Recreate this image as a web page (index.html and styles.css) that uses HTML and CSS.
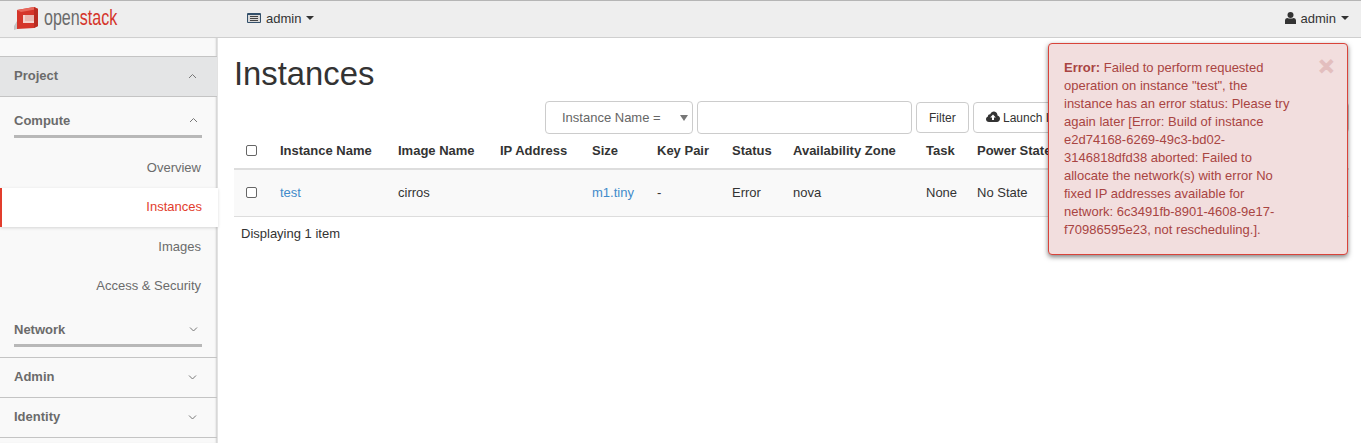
FILE: index.html
```html
<!DOCTYPE html>
<html lang="en">
<head>
    <meta charset="UTF-8">
    <title>Instances</title>
    <link rel="stylesheet" href="styles.css">
</head>
<body>
    <nav class="topbar">
        <a class="brand">
            <svg class="brand-cube" width="25" height="24" viewBox="0 0 25 24">
                <path d="M0 20 L3 15 L3 23 L0 24 Z" fill="#c4c4c4"/>
                <path d="M3 4 L20 1 L24 3 L24 20 L20 22 L3 23 Z" fill="#d5352a"/>
                <path d="M3 4 L20 1 L24 3 L7 6 Z" fill="#e8685c"/>
                <path d="M20 1 L24 3 L24 20 L20 22 Z" fill="#b92c22"/>
                <rect x="9" y="9" width="11" height="8" fill="#f4d4cf"/>
                <rect x="11" y="9" width="9" height="6" fill="#e9b9b2"/>
            </svg>
            <span class="brand-word"><span class="brand-open">open</span><span class="brand-stack">stack</span></span>
        </a>
        <a class="project-menu">
            <svg width="14" height="12" viewBox="0 0 14 12">
                <rect x="0" y="1" width="14" height="10" rx="1" fill="#33506b"/>
                <rect x="1" y="3" width="12" height="7" fill="#d8d8d8"/>
                <path d="M3 4.5h8M3 6.5h8M3 8.5h8" stroke="#444" stroke-width="1"/>
            </svg>
            admin <span class="caret"></span>
        </a>
        <a class="user-menu">
            <svg width="11" height="12" viewBox="0 0 11 12">
                <circle cx="5.5" cy="3" r="3" fill="#333"/>
                <path d="M0 12 V8.5 C0 6.8 1.4 6 2.6 6 C3.4 6.8 7.6 6.8 8.4 6 C9.6 6 11 6.8 11 8.5 V12 Z" fill="#333"/>
            </svg>
            admin <span class="caret"></span>
        </a>
    </nav>

    <div class="page">
        <aside class="sidebar">
            <div class="side-dash active-dash">
                <span>Project</span>
                <svg class="chev" width="9" height="6" viewBox="0 0 9 6"><path d="M1 5 L4.5 1.5 L8 5"/></svg>
            </div>
            <div class="side-group">
                <span>Compute</span>
                <svg class="chev" width="9" height="6" viewBox="0 0 9 6"><path d="M1 5 L4.5 1.5 L8 5"/></svg>
            </div>
            <ul class="side-links">
                <li>Overview</li>
                <li class="current">Instances</li>
                <li>Images</li>
                <li>Access &amp; Security</li>
            </ul>
            <div class="side-group">
                <span>Network</span>
                <svg class="chev" width="9" height="6" viewBox="0 0 9 6"><path d="M1 1.5 L4.5 5 L8 1.5"/></svg>
            </div>
            <div class="side-dash first-closed">
                <span>Admin</span>
                <svg class="chev" width="9" height="6" viewBox="0 0 9 6"><path d="M1 1.5 L4.5 5 L8 1.5"/></svg>
            </div>
            <div class="side-dash">
                <span>Identity</span>
                <svg class="chev" width="9" height="6" viewBox="0 0 9 6"><path d="M1 1.5 L4.5 5 L8 1.5"/></svg>
            </div>
        </aside>

        <main class="content">
            <h1>Instances</h1>
            <div class="toolbar">
                <div class="filter-select">
                    <span>Instance Name =</span>
                    <span class="select-arrow"></span>
                </div>
                <input class="filter-input" type="text">
                <button class="btn">Filter</button>
                <button class="btn btn-launch">
                    <svg width="14" height="11" viewBox="0 0 14 11">
                        <path fill-rule="evenodd" d="M3 11 C1.2 11 0 9.7 0 8.2 C0 6.9 .8 5.9 1.9 5.5 C1.9 3.9 3.1 3 4.3 3.2 C5 1.4 6.5 .3 8.2 .5 C10.2 .7 11.5 2.3 11.5 4.4 C13 4.8 14 6 14 7.6 C14 9.6 12.6 11 11 11 Z M7 3.4 L4.2 6.4 H6 V9 H8 V6.4 H9.8 Z" fill="#333"/>
                    </svg>
                    Launch Instance
                </button>
            </div>

            <table class="instances">
                <colgroup>
                    <col class="c-check"><col class="c-name"><col class="c-image"><col class="c-ip"><col class="c-size">
                    <col class="c-key"><col class="c-status"><col class="c-zone"><col class="c-task"><col class="c-power">
                </colgroup>
                <thead>
                    <tr>
                        <th><input class="check" type="checkbox"></th>
                        <th>Instance Name</th>
                        <th>Image Name</th>
                        <th>IP Address</th>
                        <th>Size</th>
                        <th>Key Pair</th>
                        <th>Status</th>
                        <th>Availability Zone</th>
                        <th>Task</th>
                        <th>Power State</th>
                    </tr>
                </thead>
                <tbody>
                    <tr>
                        <td><input class="check" type="checkbox"></td>
                        <td><a>test</a></td>
                        <td>cirros</td>
                        <td></td>
                        <td><a>m1.tiny</a></td>
                        <td>-</td>
                        <td>Error</td>
                        <td>nova</td>
                        <td>None</td>
                        <td>No State</td>
                    </tr>
                </tbody>
            </table>
            <p class="table-count">Displaying 1 item</p>
        </main>
    </div>

    <div class="toast">
        <span class="toast-close">&times;</span>
        <strong>Error:</strong> Failed to perform requested operation on instance "test", the instance has an error status: Please try again later [Error: Build of instance e2d74168-6269-49c3-bd02-3146818dfd38 aborted: Failed to allocate the network(s) with error No fixed IP addresses available for network: 6c3491fb-8901-4608-9e17-f70986595e23, not rescheduling.].
    </div>
</body>
</html>
```

FILE: styles.css
```css
* {
    box-sizing: border-box;
}

html, body {
    height: 100%;
}

body {
    margin: 0;
    overflow: hidden;
    font-family: "Liberation Sans", Arial, sans-serif;
    font-size: 13px;
    color: #333;
    background: #fff;
}

a {
    color: #428bca;
}

/* top bar */
.topbar {
    display: flex;
    align-items: center;
    height: 38px;
    padding: 0 12px 2px 0;
    background: #eeeeee;
    border-top: 1px solid #b5b5b5;
    border-bottom: 1px solid #cfcfcf;
}

.topbar a {
    color: #333;
}

.brand {
    display: flex;
    align-items: center;
    width: 247px;
    padding-left: 14px;
}

.brand-cube {
    margin-right: 5px;
}

.brand-word {
    display: inline-block;
    font-size: 22px;
    transform: scaleX(0.73);
    transform-origin: left center;
}

.brand-open {
    color: #6b6b6b;
}

.brand-stack {
    color: #d5352a;
}

.project-menu,
.user-menu {
    display: flex;
    align-items: center;
    gap: 5px;
}

.user-menu {
    margin-left: auto;
}

.caret {
    width: 0;
    height: 0;
    border-top: 4px solid #333;
    border-left: 4px solid transparent;
    border-right: 4px solid transparent;
}

/* sidebar */
.page {
    display: flex;
    height: calc(100% - 38px);
}

.sidebar {
    flex: none;
    width: 218px;
    padding-top: 18px;
    background: #f9f9f9;
    border-right: 1px solid #e2e2e2;
    box-shadow: inset -2px 0 2px -1px #ccc;
    color: #6b6b6b;
}

.side-dash {
    display: flex;
    justify-content: space-between;
    align-items: center;
    height: 40px;
    padding: 0 20px 2px 14px;
    border-bottom: 1px solid #c4c4c4;
    font-weight: bold;
}

.active-dash,
.first-closed {
    height: 41px;
    border-top: 1px solid #c4c4c4;
}

.active-dash {
    background: #e4e5e6;
}

.side-group {
    display: flex;
    justify-content: space-between;
    align-items: center;
    height: 28px;
    margin: 13px 15px 10px 14px;
    padding-right: 4px;
    padding-bottom: 5px;
    border-bottom: 3px solid #b8b8b8;
    font-weight: bold;
}

.side-links + .side-group {
    margin-top: 14px;
}

.chev {
    fill: none;
    stroke: #777;
    stroke-width: 1;
}

.side-links {
    margin: 0;
    padding: 0;
    list-style: none;
    text-align: right;
}

.side-links li {
    height: 39px;
    padding-right: 16px;
    line-height: 39px;
}

.side-links li:first-child {
    height: 40px;
}

.side-links .current {
    position: relative;
    width: 218px;
    line-height: 37px;
    background: #fff;
    border-left: 2px solid #e23d2d;
    color: #e23d2d;
    box-shadow: 0 1px 3px rgba(0, 0, 0, 0.15);
}

/* main area */
.content {
    flex: 1;
    min-width: 0;
    padding: 0 12px 0 16px;
}

h1 {
    margin: 16px 0 0;
    font-size: 32.8px;
    font-weight: normal;
    line-height: 40px;
}

.toolbar {
    display: flex;
    align-items: flex-start;
    gap: 4px;
    height: 33px;
    margin-top: 7px;
    padding-left: 311px;
}

.filter-select {
    display: flex;
    justify-content: space-between;
    align-items: center;
    flex: none;
    width: 148px;
    height: 33px;
    padding: 0 4px 0 16px;
    border: 1px solid #ccc;
    border-radius: 4px;
    color: #666;
}

.select-arrow {
    width: 0;
    height: 0;
    border-top: 6px solid #777;
    border-left: 4px solid transparent;
    border-right: 4px solid transparent;
}

.filter-input {
    flex: none;
    width: 215px;
    height: 33px;
    border: 1px solid #ccc;
    border-radius: 4px;
}

.btn {
    flex: none;
    height: 31px;
    margin-top: 1px;
    padding: 0 12px;
    font-family: inherit;
    font-size: 12px;
    color: #333;
    background: #fff;
    border: 1px solid #ccc;
    border-radius: 4px;
}

.btn-launch {
    flex: 1;
    text-align: left;
}

.instances {
    width: 100%;
    table-layout: fixed;
    border-collapse: collapse;
}

.c-check { width: 38px; }
.c-name { width: 118px; }
.c-image { width: 102px; }
.c-ip { width: 92px; }
.c-size { width: 65px; }
.c-key { width: 75px; }
.c-status { width: 61px; }
.c-zone { width: 133px; }
.c-task { width: 51px; }

.instances th,
.instances td {
    padding: 0 8px;
    text-align: left;
    white-space: nowrap;
}

.instances th {
    height: 35px;
    padding-bottom: 2px;
    border-bottom: 2px solid #ddd;
}

.instances td {
    height: 47px;
    background: #f9f9f9;
    border-bottom: 1px solid #ddd;
}

.check {
    appearance: none;
    display: block;
    width: 11px;
    height: 11px;
    margin: 0 0 0 4px;
    background: #fff;
    border: 1px solid #666;
    border-radius: 2px;
}

.table-count {
    margin: 9px 0 0 7px;
    line-height: 16px;
}

/* error toast */
.toast {
    position: absolute;
    top: 43px;
    left: 1048px;
    width: 300px;
    height: 212px;
    padding: 15px 51px 15px 15px;
    color: #a94442;
    font-size: 13px;
    line-height: 18px;
    background: #f2dede;
    border: 1px solid #d9433a;
    border-radius: 4px;
    box-shadow: 0 2px 5px rgba(0, 0, 0, 0.5);
}

.toast-close {
    position: absolute;
    top: 7px;
    right: 13px;
    font-size: 26px;
    font-weight: bold;
    line-height: 30px;
    color: #a94442;
    opacity: 0.2;
    -webkit-text-stroke: 1px #a94442;
}
```
